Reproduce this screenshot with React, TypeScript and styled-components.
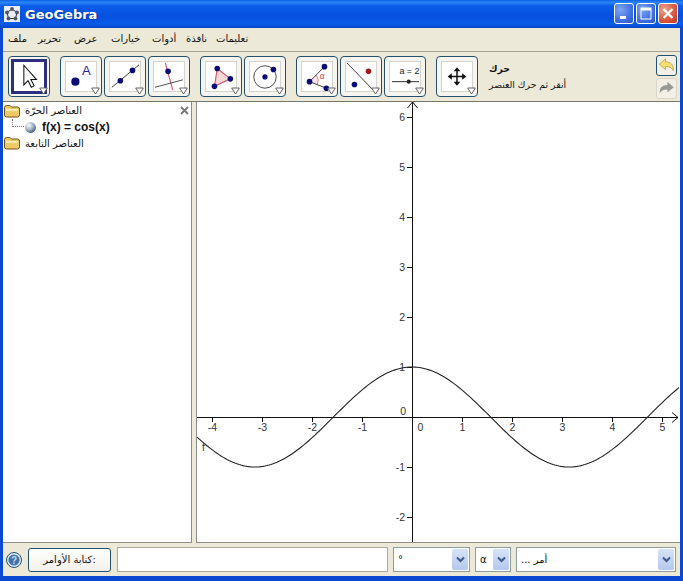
import React from "react";
import styled, { createGlobalStyle } from "styled-components";

const Global = createGlobalStyle`
  html, body { margin: 0; padding: 0; background: #0a3fc4; }
  #root { width: 683px; height: 581px; overflow: hidden; }
`;

const AR = `"DejaVu Sans", "Noto Sans", sans-serif`;

const Win = styled.div`
  width: 683px;
  height: 581px;
  display: flex;
  flex-direction: column;
  background: #0a48d2;
  font-family: ${AR};
  color: #111;
`;
const TitleBar = styled.div`
  height: 28px;
  flex: none;
  display: flex;
  align-items: center;
  padding: 0 5px 0 4px;
  background: linear-gradient(180deg, #0d5fe6 0%, #2a86f5 8%, #0a5ce8 22%, #0651e0 60%, #0a5ce8 85%, #0645c8 100%);
`;
const TitleText = styled.span`
  margin-left: 5px;
  flex: 1;
  color: #fff;
  font: bold 13px "DejaVu Sans", sans-serif;
  text-shadow: 1px 1px 1px #063aa8;
`;
const WinBtns = styled.div`
  display: flex;
  gap: 2px;
  margin-bottom: 2px;
`;
const WinBtn = styled.div<{ $close?: boolean }>`
  width: 20px;
  height: 21px;
  box-sizing: border-box;
  border: 1px solid #fff;
  border-radius: 3px;
  display: flex;
  align-items: center;
  justify-content: center;
  background: ${(p) =>
    p.$close
      ? "radial-gradient(circle at 30% 30%, #f0a590, #d8543a 60%, #c23a20)"
      : "radial-gradient(circle at 30% 30%, #7ea6f4, #3f70e0 60%, #2a55c8)"};
`;
const Body = styled.div`
  flex: 1;
  min-height: 0;
  margin: 0 3px 5px;
  display: flex;
  flex-direction: column;
  background: #ece9d8;
`;
const MenuBar = styled.div`
  height: 24px;
  flex: none;
  box-sizing: border-box;
  display: flex;
  align-items: center;
  padding: 0 0 3px 5px;
  border-bottom: 1px solid #a6a595;
  font-size: 10px;
`;
const MenuItem = styled.span<{ $w: number }>`
  width: ${(p) => p.$w}px;
  flex: none;
  white-space: nowrap;
`;
const ToolBar = styled.div`
  height: 50px;
  flex: none;
  box-sizing: border-box;
  display: flex;
  align-items: center;
  padding-left: 5px;
  border-bottom: 1px solid #77776e;
`;
const ToolGroup = styled.div`
  display: flex;
  gap: 2px;
  margin-right: 10px;
`;
const Tool = styled.div<{ $active?: boolean }>`
  position: relative;
  width: 42px;
  height: 41px;
  box-sizing: border-box;
  border: 1px solid #23506e;
  border-radius: 4px;
  background: #f6f5ef;
  padding: ${(p) => (p.$active ? "2px" : "4px")};
`;
const ToolFace = styled.div<{ $active?: boolean }>`
  width: 100%;
  height: 100%;
  box-sizing: border-box;
  background: #fff;
  border: ${(p) => (p.$active ? "3px solid #2c2f7e" : "1px solid #d4d3cc")};
  svg { display: block; width: 100%; height: 100%; }
`;
const Corner = styled.svg`
  position: absolute;
  right: 1px;
  bottom: 1px;
  width: 9px;
  height: 8px;
`;
const Help = styled.div`
  margin-left: 1px;
  width: 163px;
  flex: none;
  font-size: 9.3px;
  line-height: 16px;
  white-space: nowrap;
`;
const HelpTitle = styled.div`
  font-weight: bold;
`;
const UndoStack = styled.div`
  display: flex;
  flex-direction: column;
  gap: 2px;
  margin-left: auto;
  margin-right: 3px;
`;
const UndoBtn = styled.div<{ $off?: boolean }>`
  width: 21px;
  height: 21px;
  box-sizing: border-box;
  border: 1px solid ${(p) => (p.$off ? "#d8d6c8" : "#23506e")};
  border-radius: 3px;
  background: #f1efe6;
  svg { display: block; width: 100%; height: 100%; }
`;
const Main = styled.div`
  flex: 1;
  min-height: 0;
  display: flex;
  gap: 4px;
`;
const TreePanel = styled.div`
  position: relative;
  width: 189px;
  flex: none;
  box-sizing: border-box;
  background: #fff;
  border-right: 1px solid #8e8e86;
  border-bottom: 1px solid #8e8e86;
  font-size: 10px;
`;
const TreeRow = styled.div<{ $h: number }>`
  height: ${(p) => p.$h}px;
  display: flex;
  align-items: center;
  gap: 4px;
  white-space: nowrap;
`;
const Child = styled(TreeRow)`
  padding-left: 9px;
  gap: 0;
`;
const Dots = styled.div`
  width: 12px;
  height: 8px;
  margin-top: -8px;
  border-left: 1px dotted #777;
  border-bottom: 1px dotted #777;
  box-sizing: border-box;
`;
const FnText = styled.span`
  margin-left: 5px;
  font: bold 12px "Liberation Sans", Arial, sans-serif;
`;
const CloseX = styled.svg`
  position: absolute;
  top: 4px;
  right: 2px;
  width: 9px;
  height: 9px;
`;
const Graph = styled.div`
  flex: 1;
  min-width: 0;
  background: #fff;
  border-left: 1px solid #8e8e86;
  border-bottom: 1px solid #8e8e86;
  svg { display: block; }
`;
const Bottom = styled.div`
  height: 33px;
  flex: none;
  box-sizing: border-box;
  display: flex;
  align-items: center;
  padding: 0 2px 0 3px;
`;
const HelpIcon = styled.svg`
  width: 16px;
  height: 16px;
  flex: none;
`;
const CmdBtn = styled.div`
  margin-left: 6px;
  width: 83px;
  height: 24px;
  box-sizing: border-box;
  border: 1px solid #23506e;
  border-radius: 3px;
  background: linear-gradient(180deg, #fff, #f2f1ea);
  display: flex;
  align-items: center;
  justify-content: center;
  font-size: 10px;
`;
const Input = styled.div`
  margin-left: 6px;
  width: 271px;
  height: 25px;
  box-sizing: border-box;
  background: #fff;
  border: 1px solid #a9a99c;
`;
const Select = styled.div<{ $w: number; $gap: number }>`
  margin-left: ${(p) => p.$gap}px;
  width: ${(p) => p.$w}px;
  height: 25px;
  flex: none;
  box-sizing: border-box;
  background: #fff;
  border: 1px solid #8f9c9c;
  display: flex;
  align-items: center;
  padding: 1px 1px 1px 4px;
  font-size: 10px;
  white-space: nowrap;
`;
const SelectText = styled.span`
  flex: 1;
`;
const Arrow = styled.div`
  width: 16px;
  height: 100%;
  flex: none;
  border-radius: 2px;
  background: linear-gradient(180deg, #d6e2f7, #b4c8ee);
  display: flex;
  align-items: center;
  justify-content: center;
`;

const Folder = () => (
  <svg width="18" height="14" viewBox="0 0 18 14" style={{ flex: "none" }}>
    <path d="M1.5 3.5 Q1.5 1.5 3.5 1.5 H7 L8.5 3 H14.5 Q16.5 3 16.5 5 V11 Q16.5 13 14.5 13 H3.5 Q1.5 13 1.5 11 Z" fill="#eec96a" stroke="#6e5518" />
    <path d="M3 5 H15 V6.8 H3 Z" fill="#fff3b8" />
  </svg>
);

const Tri = () => (
  <Corner viewBox="0 0 9 8">
    <path d="M0.7 1 H8.3 L4.5 7 Z" fill="#fff" stroke="#555" strokeWidth="0.9" />
  </Corner>
);

const B = "#0a0a78";
const Dot = ({ x, y, r = 3.4, c = B }: { x: number; y: number; r?: number; c?: string }) => <circle cx={x} cy={y} r={r} fill={c} />;

const icons: React.ReactNode[] = [
  <svg viewBox="0 0 32 31">
    <Dot x={10} y={21} r={4.4} />
    <text x="17" y="14" fontFamily="Liberation Sans, sans-serif" fontSize="14" fill="#24249a">A</text>
  </svg>,
  <svg viewBox="0 0 32 31">
    <line x1="2" y1="27" x2="31" y2="3" stroke="#333" strokeWidth="1" />
    <Dot x={11} y={20} r={3} />
    <Dot x={24} y={9} r={3} />
  </svg>,
  <svg viewBox="0 0 32 31">
    <line x1="12" y1="1" x2="20" y2="30" stroke="#d8546e" strokeWidth="1.2" />
    <line x1="1" y1="27" x2="31" y2="19" stroke="#444" strokeWidth="1" />
    <Dot x={15} y={10} r={3} />
  </svg>,
  <svg viewBox="0 0 32 31">
    <polygon points="12,7 26,18 9,26" fill="#f6d8d8" stroke="#d8546e" strokeWidth="1.2" />
    <Dot x={12} y={7} r={3} />
    <Dot x={26} y={18} r={3} />
    <Dot x={9} y={26} r={3} />
  </svg>,
  <svg viewBox="0 0 32 31">
    <circle cx="16" cy="16" r="12" fill="none" stroke="#444" strokeWidth="1" />
    <Dot x={16} y={16} r={2.8} />
    <Dot x={25} y={8} r={3} />
  </svg>,
  <svg viewBox="0 0 32 31">
    <path d="M15 14 Q19 19 16 24 L8 21 Z" fill="#f9e2e2" />
    <path d="M15 14 Q19 19 16 24" fill="none" stroke="#d8546e" strokeWidth="0.8" />
    <path d="M24 5 L8 21 L26 28" fill="none" stroke="#333" strokeWidth="1" />
    <Dot x={24} y={5} r={3} />
    <Dot x={8} y={21} r={3} />
    <Dot x={26} y={28} r={3} />
    <text x="19" y="18" fontFamily="Liberation Sans, sans-serif" fontSize="9" fill="#d8404a">α</text>
  </svg>,
  <svg viewBox="0 0 32 31">
    <line x1="1" y1="1" x2="29" y2="30" stroke="#333" strokeWidth="1" />
    <Dot x={24} y={10} r={3} c="#a01818" />
    <Dot x={9} y={24} r={3} />
  </svg>,
  <svg viewBox="0 0 32 31">
    <text x="10" y="13" fontFamily="Liberation Sans, sans-serif" fontSize="9.5" fill="#222">a = 2</text>
    <line x1="2" y1="21" x2="31" y2="21" stroke="#222" strokeWidth="1" />
    <Dot x={20} y={21} r={2.2} c="#222" />
  </svg>,
];

const Move = () => (
  <svg viewBox="0 0 32 31">
    <path d="M16 5.5 L19.5 10 H16.8 V14.7 H21.5 V12 L26 15.5 L21.5 19 V16.3 H16.8 V21 H19.5 L16 25.5 L12.5 21 H15.2 V16.3 H10.5 V19 L6 15.5 L10.5 12 V14.7 H15.2 V10 H12.5 Z" fill="#111" />
  </svg>
);

// The function plot: x = 215 + 50u, y = 316 - 50 cos(u), in coordinates counted from y = 101.
const curve = Array.from({ length: 243 }, (_, i) => {
  const px = i * 2;
  const u = (px - 215) / 50;
  return `${px},${(316 - 50 * Math.cos(u)).toFixed(2)}`;
}).join(" ");

const Lbl = styled.text`
  font: 10.5px "Liberation Sans", Arial, sans-serif;
  fill: #333;
`;

const Plot = () => (
  <svg width="482" height="440" viewBox="0 1 482 440">
    <line x1="0" y1="316.5" x2="481" y2="316.5" stroke="#111" />
    <path d="M475 311.5 L481 316.5 L475 321.5" fill="none" stroke="#111" />
    <line x1="215.5" y1="1" x2="215.5" y2="441" stroke="#111" />
    <path d="M210.5 7 L215.5 1 L220.5 7" fill="none" stroke="#111" />
    {[-4, -3, -2, -1, 1, 2, 3, 4, 5].map((n) => (
      <g key={n}>
        <line x1={215.5 + n * 50} y1="316" x2={215.5 + n * 50} y2="321" stroke="#111" />
        <Lbl x={215.5 + n * 50} y="330" textAnchor="middle">{n}</Lbl>
      </g>
    ))}
    {[6, 5, 4, 3, 2, 1, -1, -2].map((n) => (
      <g key={n}>
        <line x1="210" y1={316.5 - n * 50} x2="215" y2={316.5 - n * 50} stroke="#111" />
        <Lbl x="208" y={320 - n * 50} textAnchor="end">{n}</Lbl>
      </g>
    ))}
    <Lbl x="209" y="314" textAnchor="end">0</Lbl>
    <Lbl x="223.5" y="330" textAnchor="middle">0</Lbl>
    <polyline points={curve} fill="none" stroke="#222" strokeWidth="1.1" />
    <Lbl x="5" y="350">f</Lbl>
  </svg>
);

const Chevron = () => (
  <svg width="9" height="7" viewBox="0 0 9 7">
    <path d="M1 1.5 L4.5 5 L8 1.5" fill="none" stroke="#3d5a8c" strokeWidth="2" />
  </svg>
);

export default function App() {
  const menus: [string, number][] = [
    ["ملف", 30], ["تحرير", 36], ["عرض", 37], ["خيارات", 41],
    ["أدوات", 34], ["نافذة", 30], ["تعليمات", 40],
  ];
  return (
    <Win>
      <Global />
      <TitleBar>
        <svg width="16" height="16" viewBox="0 0 16 16">
          <rect width="16" height="16" fill="#e8ecf4" />
          <polygon points="8,3 13,6.5 11.5,12.5 4.5,12.5 3,6.5" fill="none" stroke="#333" />
          {[[8, 3], [13, 6.5], [11.5, 12.5], [4.5, 12.5], [3, 6.5]].map(([x, y]) => (
            <circle key={x * 10 + y} cx={x} cy={y} r="1.9" fill="#556" />
          ))}
        </svg>
        <TitleText>GeoGebra</TitleText>
        <WinBtns>
          <WinBtn>
            <svg width="14" height="15" viewBox="0 0 14 15"><rect x="3" y="10" width="6" height="3" fill="#fff" /></svg>
          </WinBtn>
          <WinBtn>
            <svg width="14" height="15" viewBox="0 0 14 15"><rect x="2" y="2" width="10" height="11" fill="none" stroke="#fff" /><rect x="2" y="2" width="10" height="2.5" fill="#fff" /></svg>
          </WinBtn>
          <WinBtn $close>
            <svg width="14" height="15" viewBox="0 0 14 15"><path d="M2.5 3 L11.5 12 M11.5 3 L2.5 12" stroke="#fff" strokeWidth="2.2" /></svg>
          </WinBtn>
        </WinBtns>
      </TitleBar>
      <Body>
        <MenuBar>
          {menus.map(([m, w]) => <MenuItem key={m} $w={w}>{m}</MenuItem>)}
        </MenuBar>
        <ToolBar>
          <ToolGroup>
            <Tool $active>
              <ToolFace $active>
                <svg viewBox="0 0 32 31">
                  <path d="M10.5 3.5 V24.5 L15 20 L18.5 27 L21.5 25.5 L18 18.8 H24 Z" fill="#fff" stroke="#111" strokeWidth="1.1" />
                </svg>
              </ToolFace>
              <Tri />
            </Tool>
          </ToolGroup>
          <ToolGroup>
            {icons.slice(0, 3).map((ic, i) => <Tool key={i}><ToolFace>{ic}</ToolFace><Tri /></Tool>)}
          </ToolGroup>
          <ToolGroup>
            {icons.slice(3, 5).map((ic, i) => <Tool key={i}><ToolFace>{ic}</ToolFace><Tri /></Tool>)}
          </ToolGroup>
          <ToolGroup>
            {icons.slice(5, 8).map((ic, i) => <Tool key={i}><ToolFace>{ic}</ToolFace><Tri /></Tool>)}
          </ToolGroup>
          <ToolGroup>
            <Tool><ToolFace><Move /></ToolFace><Tri /></Tool>
          </ToolGroup>
          <Help>
            <HelpTitle>حرك</HelpTitle>
            <div>أنقر ثم حرك العنصر</div>
          </Help>
          <UndoStack>
            <UndoBtn>
              <svg viewBox="0 0 21 21"><path d="M2.5 9 L9.5 3 V6.5 C15 6.5 18.5 9.5 18 16 C16 12.5 13.5 11.5 9.5 11.5 V15 Z" fill="#f6df72" stroke="#b09a34" strokeWidth="0.8" /></svg>
            </UndoBtn>
            <UndoBtn $off>
              <svg viewBox="0 0 21 21"><path d="M18.5 9 L11.5 3 V6.5 C6 6.5 2.5 9.5 3 16 C5 12.5 7.5 11.5 11.5 11.5 V15 Z" fill="#9a9a94" /></svg>
            </UndoBtn>
          </UndoStack>
        </ToolBar>
        <Main>
          <TreePanel>
            <CloseX viewBox="0 0 9 9"><path d="M1 1 L8 8 M8 1 L1 8" stroke="#777" strokeWidth="1.8" /></CloseX>
            <TreeRow $h={17}><Folder /><span>العناصر الحرّة</span></TreeRow>
            <Child $h={16}>
              <Dots />
              <svg width="13" height="13" viewBox="0 0 12 12" style={{ flex: "none" }}>
                <defs>
                  <radialGradient id="ball" cx="35%" cy="30%" r="75%">
                    <stop offset="0%" stopColor="#fff" />
                    <stop offset="55%" stopColor="#9fb4c4" />
                    <stop offset="100%" stopColor="#3b5a6e" />
                  </radialGradient>
                </defs>
                <circle cx="6" cy="6" r="5" fill="url(#ball)" />
              </svg>
              <FnText>f(x) = cos(x)</FnText>
            </Child>
            <TreeRow $h={16}><Folder /><span>العناصر التابعة</span></TreeRow>
          </TreePanel>
          <Graph><Plot /></Graph>
        </Main>
        <Bottom>
          <HelpIcon viewBox="0 0 16 16">
            <circle cx="8" cy="8" r="7.5" fill="#e4ecf5" stroke="#1f4f78" />
            <circle cx="8" cy="8" r="5.6" fill="#3f74a8" />
            <text x="8" y="11.5" textAnchor="middle" fontFamily="Liberation Sans, sans-serif" fontWeight="bold" fontSize="10" fill="#c4d6ea">?</text>
          </HelpIcon>
          <CmdBtn>كتابة الأوامر:</CmdBtn>
          <Input />
          <Select $w={77} $gap={5}><SelectText>°</SelectText><Arrow><Chevron /></Arrow></Select>
          <Select $w={36} $gap={5}><SelectText>α</SelectText><Arrow><Chevron /></Arrow></Select>
          <Select $w={160} $gap={5}><SelectText>... أمر</SelectText><Arrow><Chevron /></Arrow></Select>
        </Bottom>
      </Body>
    </Win>
  );
}
